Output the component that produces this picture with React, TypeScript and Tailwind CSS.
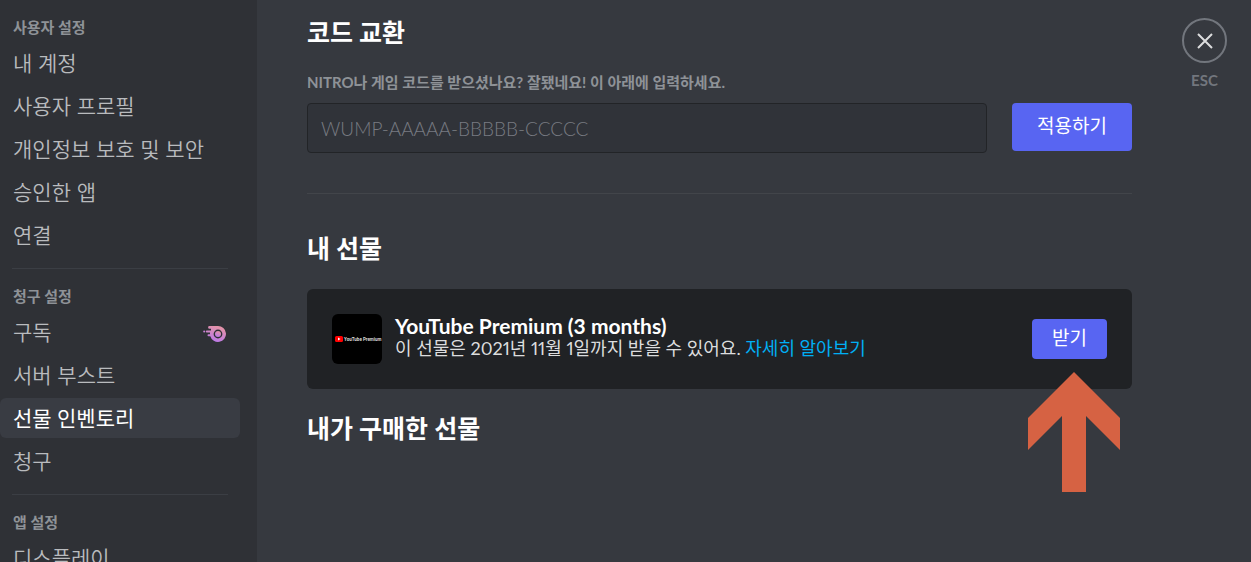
import { useState } from 'react';
import { clsx } from 'clsx';

type MenuItem = {
  label: string;
  nitro?: boolean;
};

type MenuSection = {
  title: string;
  items: MenuItem[];
};

const sections: MenuSection[] = [
  {
    title: '사용자 설정',
    items: [
      { label: '내 계정' },
      { label: '사용자 프로필' },
      { label: '개인정보 보호 및 보안' },
      { label: '승인한 앱' },
      { label: '연결' },
    ],
  },
  {
    title: '청구 설정',
    items: [
      { label: '구독', nitro: true },
      { label: '서버 부스트' },
      { label: '선물 인벤토리' },
      { label: '청구' },
    ],
  },
  {
    title: '앱 설정',
    items: [{ label: '디스플레이' }],
  },
];

function NitroIcon() {
  return (
    <svg width="24" height="18" viewBox="0 0 24 18" className="mt-1" aria-hidden="true">
      <defs>
        <linearGradient id="nitro" x1="0" y1="1" x2="0.4" y2="0">
          <stop offset="0" stopColor="#b473f5" />
          <stop offset="1" stopColor="#e292aa" />
        </linearGradient>
      </defs>
      <path
        fill="url(#nitro)"
        fillRule="evenodd"
        d="M6.5 1H15a8 8 0 1 1-7.7 10.2H5.500a1 1 0 0 1 0-2H7V7.500H3.800a1 1 0 0 1 0-2H8V3.800H6.500a1.400 1.400 0 0 1 0-2.800ZM15 4.600a4.400 4.400 0 1 0 0 8.800a4.400 4.400 0 0 0 0-8.800Z"
      />
      <circle cx="15" cy="9" r="3" fill="url(#nitro)" />
      <circle cx="1.2" cy="6.5" r="1" fill="#c983d8" />
    </svg>
  );
}

function GiftThumbnail() {
  return (
    <svg width="50" height="50" viewBox="0 0 100 100" className="shrink-0 rounded-md bg-black" role="img" aria-label="YouTube Premium">
      <rect x="6" y="44" width="16" height="12" rx="3" fill="#ff0000" />
      <path d="M12 47v6l5-3Z" fill="#fff" />
      <text x="24" y="54" fontSize="9" fontWeight="bold" fill="#d8d8d8" fontFamily="Roboto, sans-serif">
        YouTube Premium
      </text>
    </svg>
  );
}

function Sidebar() {
  const [selected, setSelected] = useState('선물 인벤토리');

  return (
    <nav className="w-[257px] shrink-0 overflow-hidden bg-[#2f3136] pt-[17px]">
      {sections.map((section, i) => (
        <div key={section.title}>
          {i > 0 && <hr className="mt-[13px] mr-[29px] mb-[17px] ml-3 border-[#3b3e44]" />}
          <h3 className="px-[13px] text-[15px] leading-5 font-bold text-[#8e9297]">{section.title}</h3>
          <ul className="mt-1.5 mr-[17px] flex flex-col gap-[3px]">
            {section.items.map((item) => (
              <li key={item.label}>
                <button
                  type="button"
                  onClick={() => setSelected(item.label)}
                  className={clsx(
                    'flex h-10 w-full items-center justify-between rounded-md px-[13px] text-left text-[21px] leading-6',
                    selected === item.label ? 'bg-[#393c43] font-normal text-white' : 'font-[350] text-[#b9bbbe]',
                  )}
                >
                  {item.label}
                  {item.nitro && <NitroIcon />}
                </button>
              </li>
            ))}
          </ul>
        </div>
      ))}
    </nav>
  );
}

export default function App() {
  const [code, setCode] = useState('');

  return (
    <div className="flex h-screen overflow-hidden bg-[#36393f] font-[Lato,'Noto_Sans_CJK_KR',sans-serif] text-[#dcddde]">
      <Sidebar />

      <main className="flex min-w-0 flex-1 items-start pt-[18px] pr-6 pl-[50px]">
        <div className="min-w-0 flex-1">
          <h2 className="text-[25px] leading-7 font-bold text-white">코드 교환</h2>
          <form onSubmit={(e) => e.preventDefault()}>
            <label htmlFor="code" className="mt-[26px] block text-[15px] leading-5 font-bold text-[#8e9297]">
              NITRO나 게임 코드를 받으셨나요? 잘됐네요! 이 아래에 입력하세요.
            </label>
            <div className="mt-[11px] flex items-start gap-[25px]">
              <input
                id="code"
                type="text"
                value={code}
                onChange={(e) => setCode(e.target.value)}
                placeholder="WUMP-AAAAA-BBBBB-CCCCC"
                className="h-[50px] min-w-0 flex-1 rounded-[4px] border border-[#222427] bg-[#303339] px-[13px] text-[19px] font-light outline-none placeholder:text-[#787b82]"
              />
              <button type="submit" className="h-12 w-[120px] rounded-[4px] bg-[#5865f2] pb-0.5 text-[19px] leading-6 font-normal text-white">
                적용하기
              </button>
            </div>
          </form>

          <hr className="mt-10 border-[#42454a]" />

          <h2 className="mt-10 text-[25px] leading-7 font-bold text-white">내 선물</h2>
          <div className="relative mt-[27px] flex items-center rounded-md bg-[#202225] p-[25px]">
            <GiftThumbnail />
            <div className="ml-[13px] min-w-0 flex-1 pb-1">
              <h3 className="text-[21px] leading-[23px] font-bold text-white">YouTube Premium (3 months)</h3>
              <p className="text-[18px] leading-[23px] font-normal proportional-nums">
                이 선물은 2021년 11월 1일까지 받을 수 있어요.{' '}
                <a href="#gift" className="text-[#00aff4]">
                  자세히 알아보기
                </a>
              </p>
            </div>
            <button type="button" className="h-10 w-[75px] rounded-[4px] bg-[#5865f2] pb-0.5 text-[19px] leading-6 font-normal text-white">
              받기
            </button>

            {/* arrow pointing at the claim button */}
            <svg width="92" height="120" viewBox="0 0 92 120" className="pointer-events-none absolute top-[83px] right-3" aria-hidden="true">
              <path d="M46 0 92 46V78L58 44V120H34V44L0 78V46Z" fill="#d66243" />
            </svg>
          </div>

          <h2 className="mt-[25px] text-[25px] leading-7 font-bold text-white">내가 구매한 선물</h2>
        </div>

        <div className="ml-[50px] flex w-[45px] flex-col items-center">
          <button
            type="button"
            aria-label="닫기"
            className="flex h-[45px] w-[45px] items-center justify-center rounded-full border-2 border-[#72767d]"
          >
            <svg width="16" height="16" viewBox="0 0 16 16" stroke="#dcddde" strokeWidth="2" aria-hidden="true">
              <path d="M1 1 15 15M15 1 1 15" />
            </svg>
          </button>
          <span className="mt-[7px] text-[15px] leading-5 font-bold text-[#72767d]">ESC</span>
        </div>
      </main>
    </div>
  );
}
